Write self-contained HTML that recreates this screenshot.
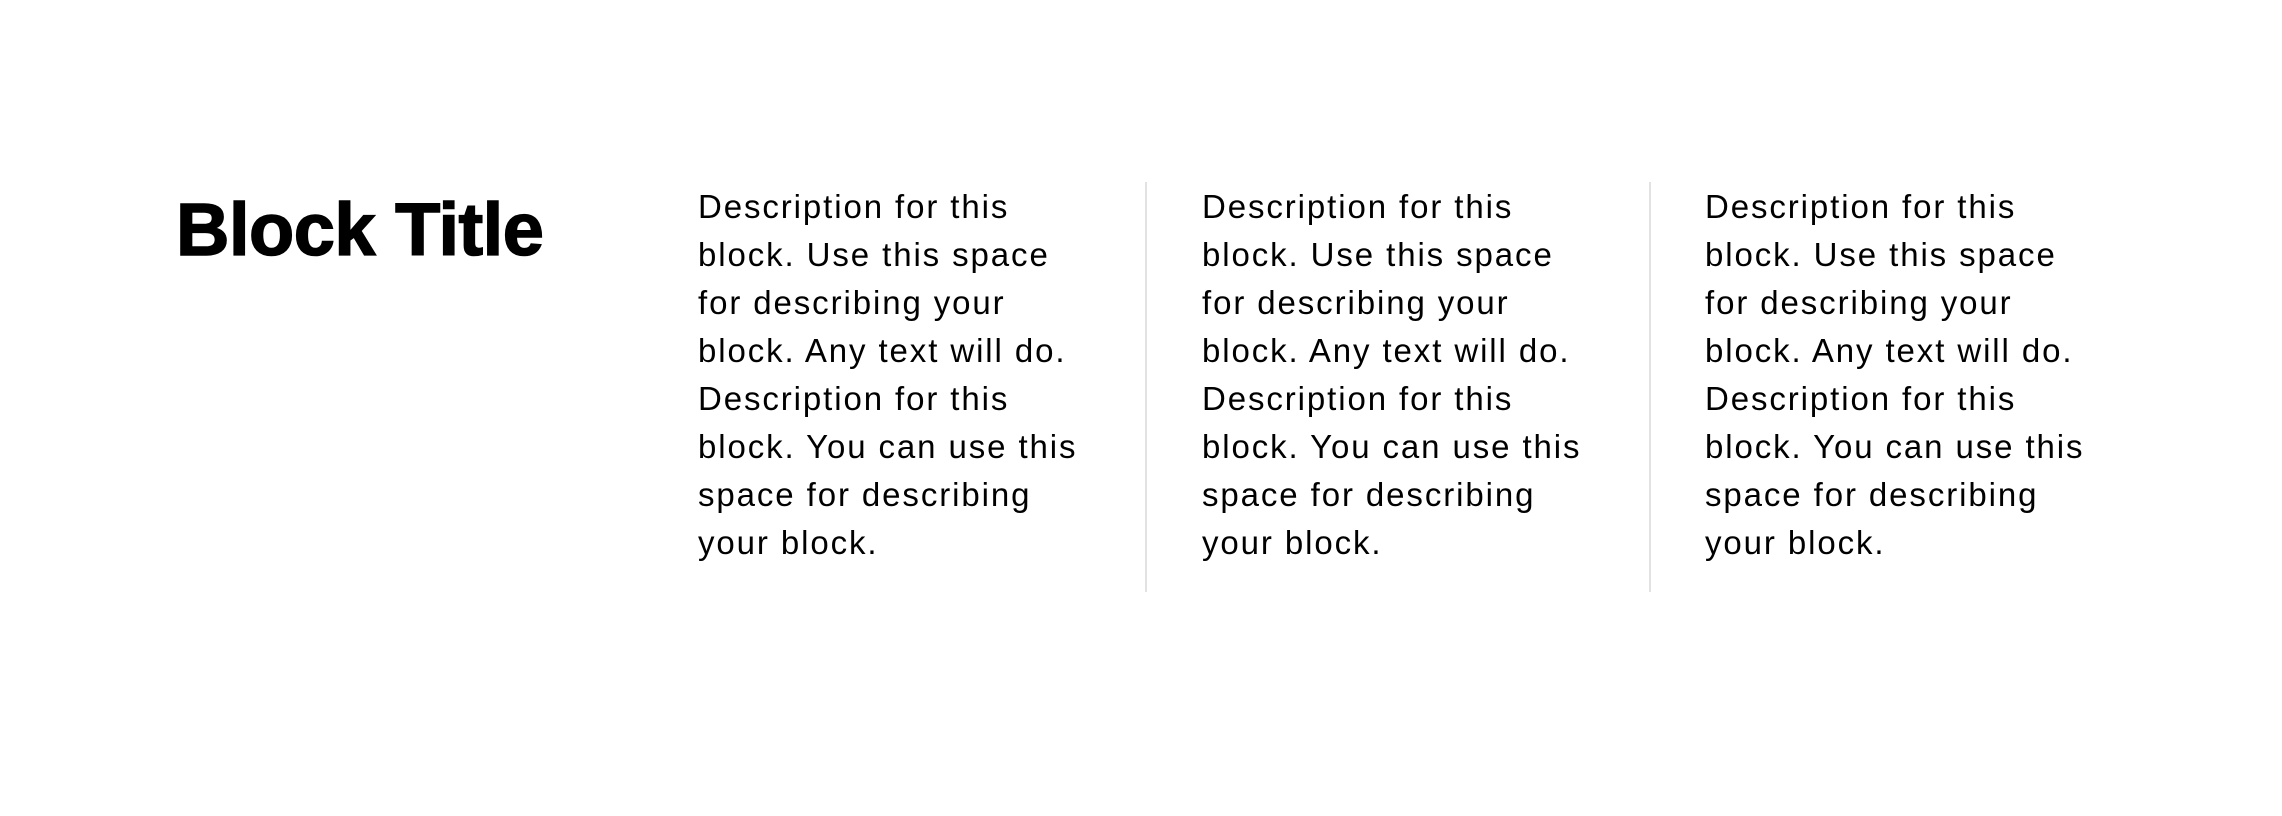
<!DOCTYPE html>
<html><head><meta charset="utf-8"><style>
html,body{margin:0;padding:0;background:#fff;width:2282px;height:816px;overflow:hidden}
body{position:relative;font-family:"Liberation Sans",sans-serif;color:#000}
h1{position:absolute;left:176px;top:182px;margin:0;font-size:74px;font-weight:700;letter-spacing:-0.5px;line-height:96px;-webkit-text-stroke:1.5px #000}
.c{position:absolute;top:183px;font-size:33px;line-height:48px;white-space:nowrap;letter-spacing:1.9px}
.d{position:absolute;top:182px;height:410px;width:2px;background:#e2e2e2}
</style></head><body>
<h1>Block Title</h1>
<div class="c" style="left:698px">Description for this<br>block. Use this space<br>for describing your<br>block. Any text will do.<br>Description for this<br>block. You can use this<br>space for describing<br>your block.</div>
<div class="d" style="left:1145px"></div>
<div class="c" style="left:1202px">Description for this<br>block. Use this space<br>for describing your<br>block. Any text will do.<br>Description for this<br>block. You can use this<br>space for describing<br>your block.</div>
<div class="d" style="left:1649px"></div>
<div class="c" style="left:1705px">Description for this<br>block. Use this space<br>for describing your<br>block. Any text will do.<br>Description for this<br>block. You can use this<br>space for describing<br>your block.</div>
</body></html>
